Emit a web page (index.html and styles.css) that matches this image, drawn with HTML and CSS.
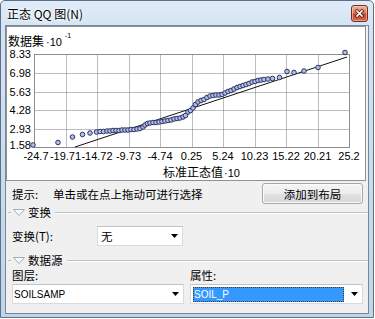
FILE: index.html
```html
<!DOCTYPE html>
<html lang="zh-CN">

<head>
    <meta charset="UTF-8">
    <meta name="viewport" content="width=device-width, initial-scale=1.0">
    <title>正态 QQ 图</title>
    <link rel="stylesheet" href="styles.css">
</head>

<body>
    <div class="window">
        <div class="titlebar">
            <span class="title">正态 QQ 图(N)</span>
            <button class="close" title="关闭">
                <svg width="15" height="15" viewBox="0 0 15 15">
                    <path d="M5 5 L10 10 M10 5 L5 10" stroke="#5a2418" stroke-width="3.2" stroke-linecap="square" fill="none" />
                    <path d="M5 5 L10 10 M10 5 L5 10" stroke="#fff" stroke-width="1.6" stroke-linecap="square" fill="none" />
                </svg>
            </button>
        </div>
        <div class="client">
            <div class="chart">
                <svg id="plot" class="plot" width="358" height="153" viewBox="7 27 358 153">
                    <g class="grid" id="grid"></g>
                    <rect class="frame" x="34.5" y="54.5" width="315" height="93" />
                    <g class="ylabels">
                        <text x="31" y="58">8.33</text>
                        <text x="31" y="77">6.98</text>
                        <text x="31" y="96">5.63</text>
                        <text x="31" y="114">4.28</text>
                        <text x="31" y="133">2.93</text>
                        <text x="31" y="149">1.58</text>
                    </g>
                    <g class="xlabels" id="xlabels"></g>
                    <line class="refline" x1="75" y1="147" x2="347" y2="57" />
                    <g id="points"></g>
                    <text class="axis-title" x="8" y="46">数据集<tspan class="unit" dx="2">·10</tspan><tspan class="sup" dx="3" dy="-8">-1</tspan></text>
                    <text class="axis-title" x="163" y="177">标准正态值<tspan class="unit" dx="1">·10</tspan></text>
                </svg>
            </div>

            <div class="hint">
                <span class="hint-label">提示:</span>
                <span class="hint-text">单击或在点上拖动可进行选择</span>
                <button class="btn">添加到布局</button>
            </div>

            <div class="section">
                <span class="lead"></span>
                <svg class="tri" width="12" height="7" viewBox="0 0 12 7">
                    <polygon points="0.5,0.5 11.5,0.5 6,6.5" fill="#fdfdfd" stroke="#a3acb8" />
                </svg>
                <span class="section-title">变换</span>
                <span class="rule"></span>
            </div>

            <div class="field">
                <label class="field-label">变换(T):</label>
                <div class="combo combo-small">
                    <span class="value">无</span>
                    <svg class="arrow" width="7" height="4" viewBox="0 0 7 4"><polygon points="0,0 7,0 3.5,4" /></svg>
                </div>
            </div>

            <div class="section section-data">
                <span class="lead"></span>
                <svg class="tri" width="12" height="7" viewBox="0 0 12 7">
                    <polygon points="0.5,0.5 11.5,0.5 6,6.5" fill="#fdfdfd" stroke="#a3acb8" />
                </svg>
                <span class="section-title">数据源</span>
                <span class="rule"></span>
            </div>

            <div class="pair">
                <div class="col">
                    <label class="col-label">图层:</label>
                    <div class="combo">
                        <span class="value latin">SOILSAMP</span>
                        <svg class="arrow" width="7" height="4" viewBox="0 0 7 4"><polygon points="0,0 7,0 3.5,4" /></svg>
                    </div>
                </div>
                <div class="col">
                    <label class="col-label">属性:</label>
                    <div class="combo">
                        <span class="sel latin">SOIL_P</span>
                        <svg class="arrow" width="7" height="4" viewBox="0 0 7 4"><polygon points="0,0 7,0 3.5,4" /></svg>
                    </div>
                </div>
            </div>
        </div>
    </div>

    <script>
        const NS = 'http://www.w3.org/2000/svg';
        const grid = document.getElementById('grid');
        const xlabels = document.getElementById('xlabels');
        const pointsGroup = document.getElementById('points');

        const xs = [34, 65.5, 97, 128.5, 160, 191.5, 223, 254.5, 286, 317.5, 349];
        const xTexts = ['-24.7', '-19.71', '-14.72', '-9.73', '-4.74', '0.25', '5.24', '10.23', '15.22', '20.21', '25.2'];
        const ys = [73, 92, 110, 129];

        function el(name, attrs) {
            const node = document.createElementNS(NS, name);
            for (const key in attrs) node.setAttribute(key, attrs[key]);
            return node;
        }

        xs.slice(1, -1).forEach(x => {
            const px = Math.round(x) + 0.5;
            grid.appendChild(el('line', { x1: px, y1: 54.5, x2: px, y2: 147.5 }));
        });
        ys.forEach(y => {
            grid.appendChild(el('line', { x1: 34.5, y1: y + 0.5, x2: 349.5, y2: y + 0.5 }));
        });

        xs.forEach((x, i) => {
            const t = el('text', { x: i === 0 ? x + 2 : x, y: 160 });
            t.textContent = xTexts[i];
            xlabels.appendChild(t);
        });

        const pts = [
            [33, 145], [58, 142.5], [72.5, 137], [82.5, 134.5], [90, 133], [96.5, 132],
            [100, 131.5], [103.5, 131.5], [107, 131], [110, 131], [113, 130.5], [116, 130.5],
            [119, 130.5], [122, 130], [125, 130], [128, 130], [131, 129.5], [134, 129.5],
            [137, 129], [140, 128.5], [143, 127], [145, 125], [147.5, 123.5], [150, 123],
            [153, 122.5], [156, 122.5], [159, 122], [162, 121.5], [165, 121], [168, 120.5],
            [171, 120], [174, 119], [177, 118.5], [180, 118], [183, 117], [185.5, 115.5],
            [188, 112], [190.5, 110.5], [193, 108], [195.5, 104.5], [198, 102], [201, 100.5],
            [204, 99.5], [207, 97.5], [210, 96], [213, 95.5], [216, 95], [219, 95],
            [222, 94.5], [225, 93], [228, 91.5], [231, 90.5], [234, 89], [237, 87.5],
            [240, 86.5], [243, 85.5], [246, 84.5], [249, 83.5], [252, 82], [255, 81.5],
            [258, 80.5], [261, 80], [264, 79.5], [268, 79], [272.5, 78.5], [279.5, 77.5],
            [287, 71.5], [294, 72.5], [304, 71], [318, 67.5], [345, 52.5]
        ];

        pts.forEach(([x, y]) => {
            pointsGroup.appendChild(el('circle', { cx: x, cy: y, r: 2.3, class: 'pt' }));
        });
    </script>
</body>

</html>
```

FILE: styles.css
```css
body {
    margin: 0;
    background-color: #fff;
    font-family: "Noto Sans CJK SC", "Noto Sans", sans-serif;
    font-size: 11.5px;
    color: #000;
}

.window {
    width: 374px;
    height: 318px;
    box-sizing: border-box;
    border: 1px solid #5f6f84;
    border-radius: 5px 5px 0 0;
    padding: 0 4px 3px 4px;
    background: linear-gradient(180deg, #dfebf8 0%, #d2e3f4 10%, #bfd5ec 100%);
    display: flex;
    flex-direction: column;
}

.titlebar {
    height: 24px;
    flex-shrink: 0;
    display: flex;
    align-items: flex-start;
    justify-content: space-between;
    padding-left: 2px;
}

.title {
    font-size: 12px;
    line-height: 16px;
    margin-top: 5px;
    text-shadow: 0 0 6px #fff, 0 0 3px #fff, 0 0 2px #fff;
}

.close {
    width: 17px;
    height: 17px;
    margin: 4px 1px 0 0;
    padding: 0;
    border: 1px solid #7a2c1c;
    border-radius: 3px;
    background: linear-gradient(180deg, #eeb2a2 0%, #dc7a60 45%, #c9452a 55%, #d8694b 100%);
    box-shadow: inset 0 0 0 1px rgba(255, 220, 210, 0.5);
    display: flex;
    align-items: center;
    justify-content: center;
}

.close svg {
    display: block;
}

.client {
    flex: 1;
    border: 1px solid #7b8796;
    background-color: #f0f0f0;
    display: flex;
    flex-direction: column;
}

.chart {
    height: 155px;
    box-sizing: border-box;
    margin-right: 2px;
    border: 1px solid #8e9298;
    background-color: #fff;
}

.plot {
    display: block;
    font-family: "Liberation Sans", Arial, sans-serif;
    font-size: 11px;
}

.grid line {
    stroke: #7a7a7a;
    stroke-width: 1;
    stroke-dasharray: 1 1;
}

.frame {
    fill: none;
    stroke: #8c8c8c;
    stroke-width: 1;
}

.ylabels text {
    text-anchor: end;
}

.xlabels text {
    text-anchor: middle;
}

.refline {
    stroke: #111;
    stroke-width: 1;
}

.pt {
    fill: #b3bde6;
    stroke: #2a3366;
    stroke-width: 1;
}

.axis-title {
    font-family: "Noto Sans CJK SC", sans-serif;
    font-size: 12px;
}

.axis-title .unit {
    font-family: "Liberation Sans", Arial, sans-serif;
    font-size: 11px;
}

.axis-title .sup {
    font-family: "Liberation Sans", Arial, sans-serif;
    font-size: 7px;
}

.hint {
    display: flex;
    align-items: center;
    height: 21px;
    margin-top: 2px;
    padding: 0 5px 0 6px;
    line-height: 14px;
}

.hint-label {
    width: 41px;
}

.hint-text {
    flex: 1;
}

.btn {
    width: 101px;
    height: 21px;
    padding: 0;
    font-family: inherit;
    font-size: 11.5px;
    color: #000;
    border: 1px solid #a8a8a8;
    border-radius: 3px;
    background: linear-gradient(180deg, #f6f6f6 0%, #ececec 50%, #e0e0e0 51%, #d8d8d8 100%);
    box-shadow: inset 0 0 0 1px #fbfbfb;
}

.section {
    display: flex;
    align-items: center;
    height: 14px;
    margin-top: 1px;
    line-height: 14px;
}

.section-data {
    margin-top: 7px;
}

.lead {
    width: 3px;
    height: 1px;
    margin-left: 2px;
    background-color: #b9c1cb;
}

.tri {
    display: block;
    margin-left: 2px;
}

.section-title {
    margin-left: 3px;
}

.rule {
    flex: 1;
    height: 1px;
    margin-left: 4px;
    background-color: #b9c1cb;
    box-shadow: 0 1px 0 #fff;
}

.field {
    display: flex;
    align-items: center;
    margin-top: 7px;
    padding-left: 6px;
    line-height: 14px;
}

.field-label {
    width: 85px;
}

.combo {
    height: 20px;
    box-sizing: border-box;
    border: 1px solid #dadada;
    border-top-color: #c4c4c4;
    background-color: #fff;
    display: flex;
    align-items: center;
    padding-left: 1px;
}

.combo-small {
    width: 86px;
    padding-left: 3px;
}

.arrow {
    display: block;
    margin-left: auto;
    margin-right: 4px;
    fill: #000;
}

.latin {
    font-family: "Liberation Sans", Arial, sans-serif;
    font-size: 10px;
}

.pair {
    display: grid;
    grid-template-columns: 172px 173px;
    column-gap: 6px;
    margin-top: 1px;
    padding: 0 5px 0 6px;
}

.col-label {
    display: block;
    height: 14px;
    line-height: 14px;
}

.col .combo {
    margin-top: 2px;
}

.sel {
    width: 151px;
    height: 15px;
    box-sizing: border-box;
    margin: 1px 0 0 1px;
    border: 1px dotted #5b3a10;
    background-color: #3399ff;
    color: #fff;
    line-height: 13px;
}
```
